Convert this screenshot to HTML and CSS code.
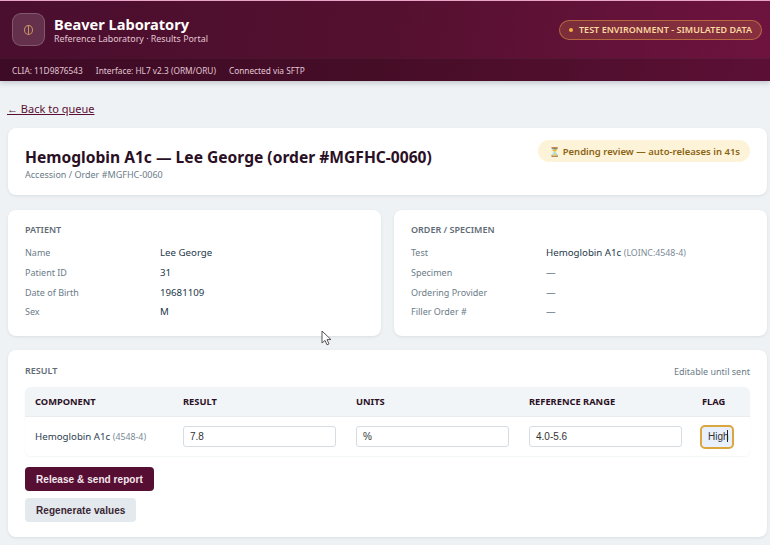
FILE: index.html
```html
<!DOCTYPE html>
<html lang="en">
<head>
    <meta charset="UTF-8">
    <meta name="viewport" content="width=device-width, initial-scale=1.0">
    <title>Beaver Laboratory - Results Portal</title>
    <link rel="stylesheet" href="styles.css">
</head>
<body>
    <header class="site-header">
        <div class="header-main">
            <div class="brand">
                <div class="brand-icon"><span class="brand-ring"></span></div>
                <div class="brand-text">
                    <div class="brand-name">Beaver Laboratory</div>
                    <div class="brand-sub">Reference Laboratory · Results Portal</div>
                </div>
            </div>
            <div class="env-badge"><span class="env-dot"></span>TEST ENVIRONMENT - SIMULATED DATA</div>
        </div>
        <div class="header-meta">
            <span>CLIA: 11D9876543</span>
            <span>Interface: HL7 v2.3 (ORM/ORU)</span>
            <span>Connected via SFTP</span>
        </div>
    </header>

    <main class="page">
        <a class="back-link" href="#">← Back to queue</a>

        <section class="card title-card">
            <div>
                <h1 class="order-title">Hemoglobin A1c — Lee George (order #MGFHC-0060)</h1>
                <div class="order-sub">Accession / Order #MGFHC-0060</div>
            </div>
            <div class="status-pill"><span class="status-icon">⏳</span>Pending review — auto-releases in 41s</div>
        </section>

        <div class="info-grid">
            <section class="card info-card">
                <h2 class="section-label">PATIENT</h2>
                <div class="info-item"><span class="info-label">Name</span><span class="info-value">Lee George</span></div>
                <div class="info-item"><span class="info-label">Patient ID</span><span class="info-value">31</span></div>
                <div class="info-item"><span class="info-label">Date of Birth</span><span class="info-value">19681109</span></div>
                <div class="info-item"><span class="info-label">Sex</span><span class="info-value">M</span></div>
            </section>
            <section class="card info-card">
                <h2 class="section-label">ORDER / SPECIMEN</h2>
                <div class="info-item"><span class="info-label">Test</span><span class="info-value">Hemoglobin A1c <span class="code">(LOINC:4548-4)</span></span></div>
                <div class="info-item"><span class="info-label">Specimen</span><span class="info-value">—</span></div>
                <div class="info-item"><span class="info-label">Ordering Provider</span><span class="info-value">—</span></div>
                <div class="info-item"><span class="info-label">Filler Order #</span><span class="info-value">—</span></div>
            </section>
        </div>

        <section class="card result-card">
            <div class="result-top">
                <h2 class="section-label">RESULT</h2>
                <span class="result-note">Editable until sent</span>
            </div>
            <div class="result-table">
                <div class="result-row result-head">
                    <span>COMPONENT</span>
                    <span>RESULT</span>
                    <span>UNITS</span>
                    <span>REFERENCE RANGE</span>
                    <span>FLAG</span>
                </div>
                <div class="result-row">
                    <span class="component">Hemoglobin A1c <span class="code">(4548-4)</span></span>
                    <input class="cell-input" type="text" value="7.8">
                    <input class="cell-input" type="text" value="%">
                    <input class="cell-input" type="text" value="4.0-5.6">
                    <div class="cell-input flag-input">High<span class="caret"></span></div>
                </div>
            </div>
            <div class="actions">
                <button class="btn btn-primary">Release &amp; send report</button>
                <button class="btn btn-secondary">Regenerate values</button>
            </div>
        </section>
    </main>

    <svg class="mouse-cursor" width="11" height="16" viewBox="0 0 11 16">
        <path d="M1 1v12l3-2.6 2 4.4 2-.9-2-4.3h4z" fill="#fff" stroke="#555" stroke-width="1"/>
    </svg>
</body>
</html>
```

FILE: styles.css
```css
* {
    box-sizing: border-box;
}

body {
    margin: 0;
    height: 545px;
    overflow: hidden;
    background: #eef2f4;
    color: #1f2937;
    font-family: "Noto Sans", "Open Sans", sans-serif;
    font-size: 10px;
}

.site-header {
    height: 81px;
    background: linear-gradient(100deg, #4a0e2e 0%, #54102f 50%, #6e133f 100%);
    border-top: 1px solid #e8a5c8;
    box-shadow: 0 2px 5px rgba(60, 70, 90, 0.25);
    color: #fff;
}

.header-main {
    height: 57px;
    padding: 0 8px 0 12px;
    display: flex;
    align-items: center;
    justify-content: space-between;
}

.brand {
    display: flex;
    align-items: center;
    gap: 9px;
}

.brand-text {
    padding-top: 2px;
}

.brand-icon {
    width: 33px;
    height: 33px;
    border-radius: 9px;
    background: rgba(255, 255, 255, 0.14);
    border: 1px solid rgba(255, 255, 255, 0.2);
    display: flex;
    align-items: center;
    justify-content: center;
}

.brand-ring {
    width: 9px;
    height: 10px;
    border: 1px solid #c9955f;
    border-radius: 50%;
    display: flex;
    justify-content: center;
}

.brand-ring::after {
    content: "";
    width: 1px;
    background: #c9955f;
}

.brand-name {
    font-size: 14.6px;
    font-weight: 700;
    line-height: 17px;
}

.brand-sub {
    font-size: 8.9px;
    line-height: 12px;
    color: #e2c7d4;
}

.env-badge {
    height: 20px;
    padding: 0 9px;
    display: flex;
    align-items: center;
    gap: 6px;
    border-radius: 10px;
    background: rgba(240, 160, 70, 0.2);
    border: 1px solid rgba(240, 160, 70, 0.5);
    color: #fbd9a0;
    font-size: 9px;
    font-weight: 600;
    letter-spacing: 0.03px;
}

.env-dot {
    width: 4px;
    height: 4px;
    border-radius: 50%;
    background: #f5b041;
}

.header-meta {
    height: 23px;
    padding: 1px 12px 0;
    display: flex;
    align-items: center;
    gap: 13px;
    background: rgba(0, 0, 0, 0.16);
    border-top: 1px solid rgba(255, 255, 255, 0.04);
    color: #e2c7d4;
    font-size: 8.3px;
}

.page {
    padding: 19px 3px 0 8px;
}

.back-link {
    display: block;
    margin-left: -1px;
    height: 18px;
    line-height: 18px;
    font-size: 11px;
    color: #5a1035;
}

.card {
    background: #fff;
    border-radius: 8px;
    box-shadow: 0 1px 3px rgba(40, 60, 80, 0.1);
}

.title-card {
    margin-top: 10px;
    height: 67px;
    padding: 12px 17px;
    display: flex;
    justify-content: space-between;
    align-items: flex-start;
}

.order-title {
    margin: 7px 0 0;
    font-size: 15.6px;
    line-height: 21px;
    font-weight: 700;
    color: #2a1025;
}

.order-sub {
    font-size: 9px;
    line-height: 14px;
    color: #6b7c88;
}

.status-pill {
    height: 22px;
    padding: 0 10px 0 11px;
    display: flex;
    align-items: center;
    gap: 3px;
    border-radius: 11px;
    background: #fdf3d8;
    color: #8a6414;
    font-size: 9.5px;
    font-weight: 600;
}

.status-icon {
    font-size: 9px;
}

.info-grid {
    margin-top: 15px;
    display: grid;
    grid-template-columns: 373px 373px;
    gap: 13px;
}

.info-card {
    height: 126px;
    padding: 13px 17px;
}

.section-label {
    margin: 0;
    font-size: 9px;
    line-height: 13px;
    font-weight: 600;
    color: #5f6b75;
}

.info-card .section-label {
    margin-bottom: 7px;
}

.info-item {
    height: 19.7px;
    display: flex;
    align-items: center;
}

.info-label {
    width: 135px;
    color: #6b7c88;
    font-size: 9px;
}

.info-value {
    color: #24384a;
    font-size: 9.7px;
}

.code {
    color: #7b8a96;
    font-size: 8.8px;
}

.result-card {
    margin-top: 14px;
    height: 187px;
    padding: 12px 17px;
}

.result-top {
    display: flex;
    justify-content: space-between;
    align-items: center;
    height: 17px;
}

.result-note {
    padding-top: 2px;
    color: #6b7c88;
    font-size: 9px;
}

.result-table {
    margin-top: 8px;
    border-radius: 6px;
    box-shadow: 0 1px 2px rgba(40, 60, 80, 0.06);
}

.result-row {
    height: 39px;
    padding: 0 10px;
    display: grid;
    grid-template-columns: 148px 173px 173px 173px 1fr;
    align-items: center;
}

.result-head {
    height: 30px;
    background: #f2f5f7;
    border-bottom: 1px solid #e9edf0;
    border-radius: 6px 6px 0 0;
    color: #2a1025;
    font-size: 9.3px;
    font-weight: 700;
}

.component {
    color: #2d4050;
    font-size: 9.7px;
}

.cell-input {
    width: 153px;
    height: 21px;
    padding: 0 6px 1px;
    border: 1px solid #d5dde2;
    border-radius: 3px;
    background: #fff;
    color: #333;
    font-family: "Liberation Sans", sans-serif;
    font-size: 10px;
}

.flag-input {
    width: 34px;
    height: 24px;
    margin-left: -2px;
    display: flex;
    align-items: center;
    padding: 0 0 1px 6px;
    border: 2px solid #dca63e;
    border-radius: 5px;
    background: #e8f0fe;
}

.caret {
    flex: none;
    width: 1px;
    height: 12px;
    margin-left: -2px;
    background: #222;
}

.actions {
    margin-top: 11px;
    display: flex;
    flex-direction: column;
    align-items: flex-start;
    gap: 7px;
}

.btn {
    height: 24px;
    padding: 0 11px;
    border: none;
    border-radius: 4px;
    font-family: "Liberation Sans", sans-serif;
    font-size: 10px;
    font-weight: 700;
    letter-spacing: 0.06px;
}

.btn-primary {
    background: #560f33;
    color: #f4e8ee;
}

.btn-secondary {
    background: #e3e9ec;
    color: #3a2535;
}

.mouse-cursor {
    position: absolute;
    left: 321px;
    top: 330px;
}
```
